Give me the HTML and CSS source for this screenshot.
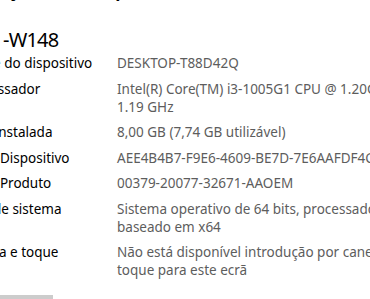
FILE: index.html
```html
<!DOCTYPE html>
<html lang="pt">
<head>
<meta charset="utf-8">
<title>Acerca de</title>
<link rel="stylesheet" href="styles.css">
</head>
<body>
<main class="about">
  <h2 class="section-title">Especificações do dispositivo</h2>
  <h3 class="model">-W148</h3>
  <dl class="specs">
    <div class="row"><dt>Nome do dispositivo</dt><dd>DESKTOP-T88D42Q</dd></div>
    <div class="row"><dt>Processador</dt><dd>Intel(R) Core(TM) i3-1005G1 CPU @ 1.20GHz   1.19 GHz</dd></div>
    <div class="row"><dt>RAM instalada</dt><dd>8,00 GB (7,74 GB utilizável)</dd></div>
    <div class="row"><dt>ID do Dispositivo</dt><dd>AEE4B4B7-F9E6-4609-BE7D-7E6AAFDF4C21</dd></div>
    <div class="row"><dt>ID do Produto</dt><dd>00379-20077-32671-AAOEM</dd></div>
    <div class="row"><dt>Tipo de sistema</dt><dd>Sistema operativo de 64 bits, processador baseado em x64</dd></div>
    <div class="row"><dt>Caneta e toque</dt><dd>Não está disponível introdução por caneta ou toque para este ecrã</dd></div>
  </dl>
  <button class="copy-btn" type="button">Copiar</button>
</main>
</body>
</html>
```
FILE: styles.css
```css
html, body {
  margin: 0;
  padding: 0;
  background: #ffffff;
  overflow: hidden;
  width: 370px;
  height: 299px;
}

body {
  font-family: "Noto Sans", "Open Sans", sans-serif;
  color: #000000;
}

.about {
  margin-left: -38px;
  width: 480px;
}

.section-title {
  font-size: 20px;
  font-weight: 600;
  line-height: 28px;
  margin: -25px 0 0 -50px;
  white-space: nowrap;
}

.model {
  font-size: 20px;
  font-weight: 400;
  letter-spacing: -0.8px;
  line-height: 28px;
  margin: 23px 0 0 41px;
  white-space: nowrap;
}

.specs {
  margin: 0;
  display: flex;
  flex-direction: column;
  gap: 7.5px;
  font-size: 13.5px;
  line-height: 18px;
}

.row {
  display: grid;
  grid-template-columns: 143px 300px;
  column-gap: 12px;
}

.row dt {
  margin: 0;
  color: #000000;
}

.row dd {
  margin: 0;
  color: #5d5d5d;
  white-space: pre-wrap;
}

.copy-btn {
  margin-top: 16px;
  width: 91px;
  height: 32px;
  border: none;
  background: #cccccc;
  font-family: inherit;
  font-size: 13.5px;
  color: #000000;
}
```
